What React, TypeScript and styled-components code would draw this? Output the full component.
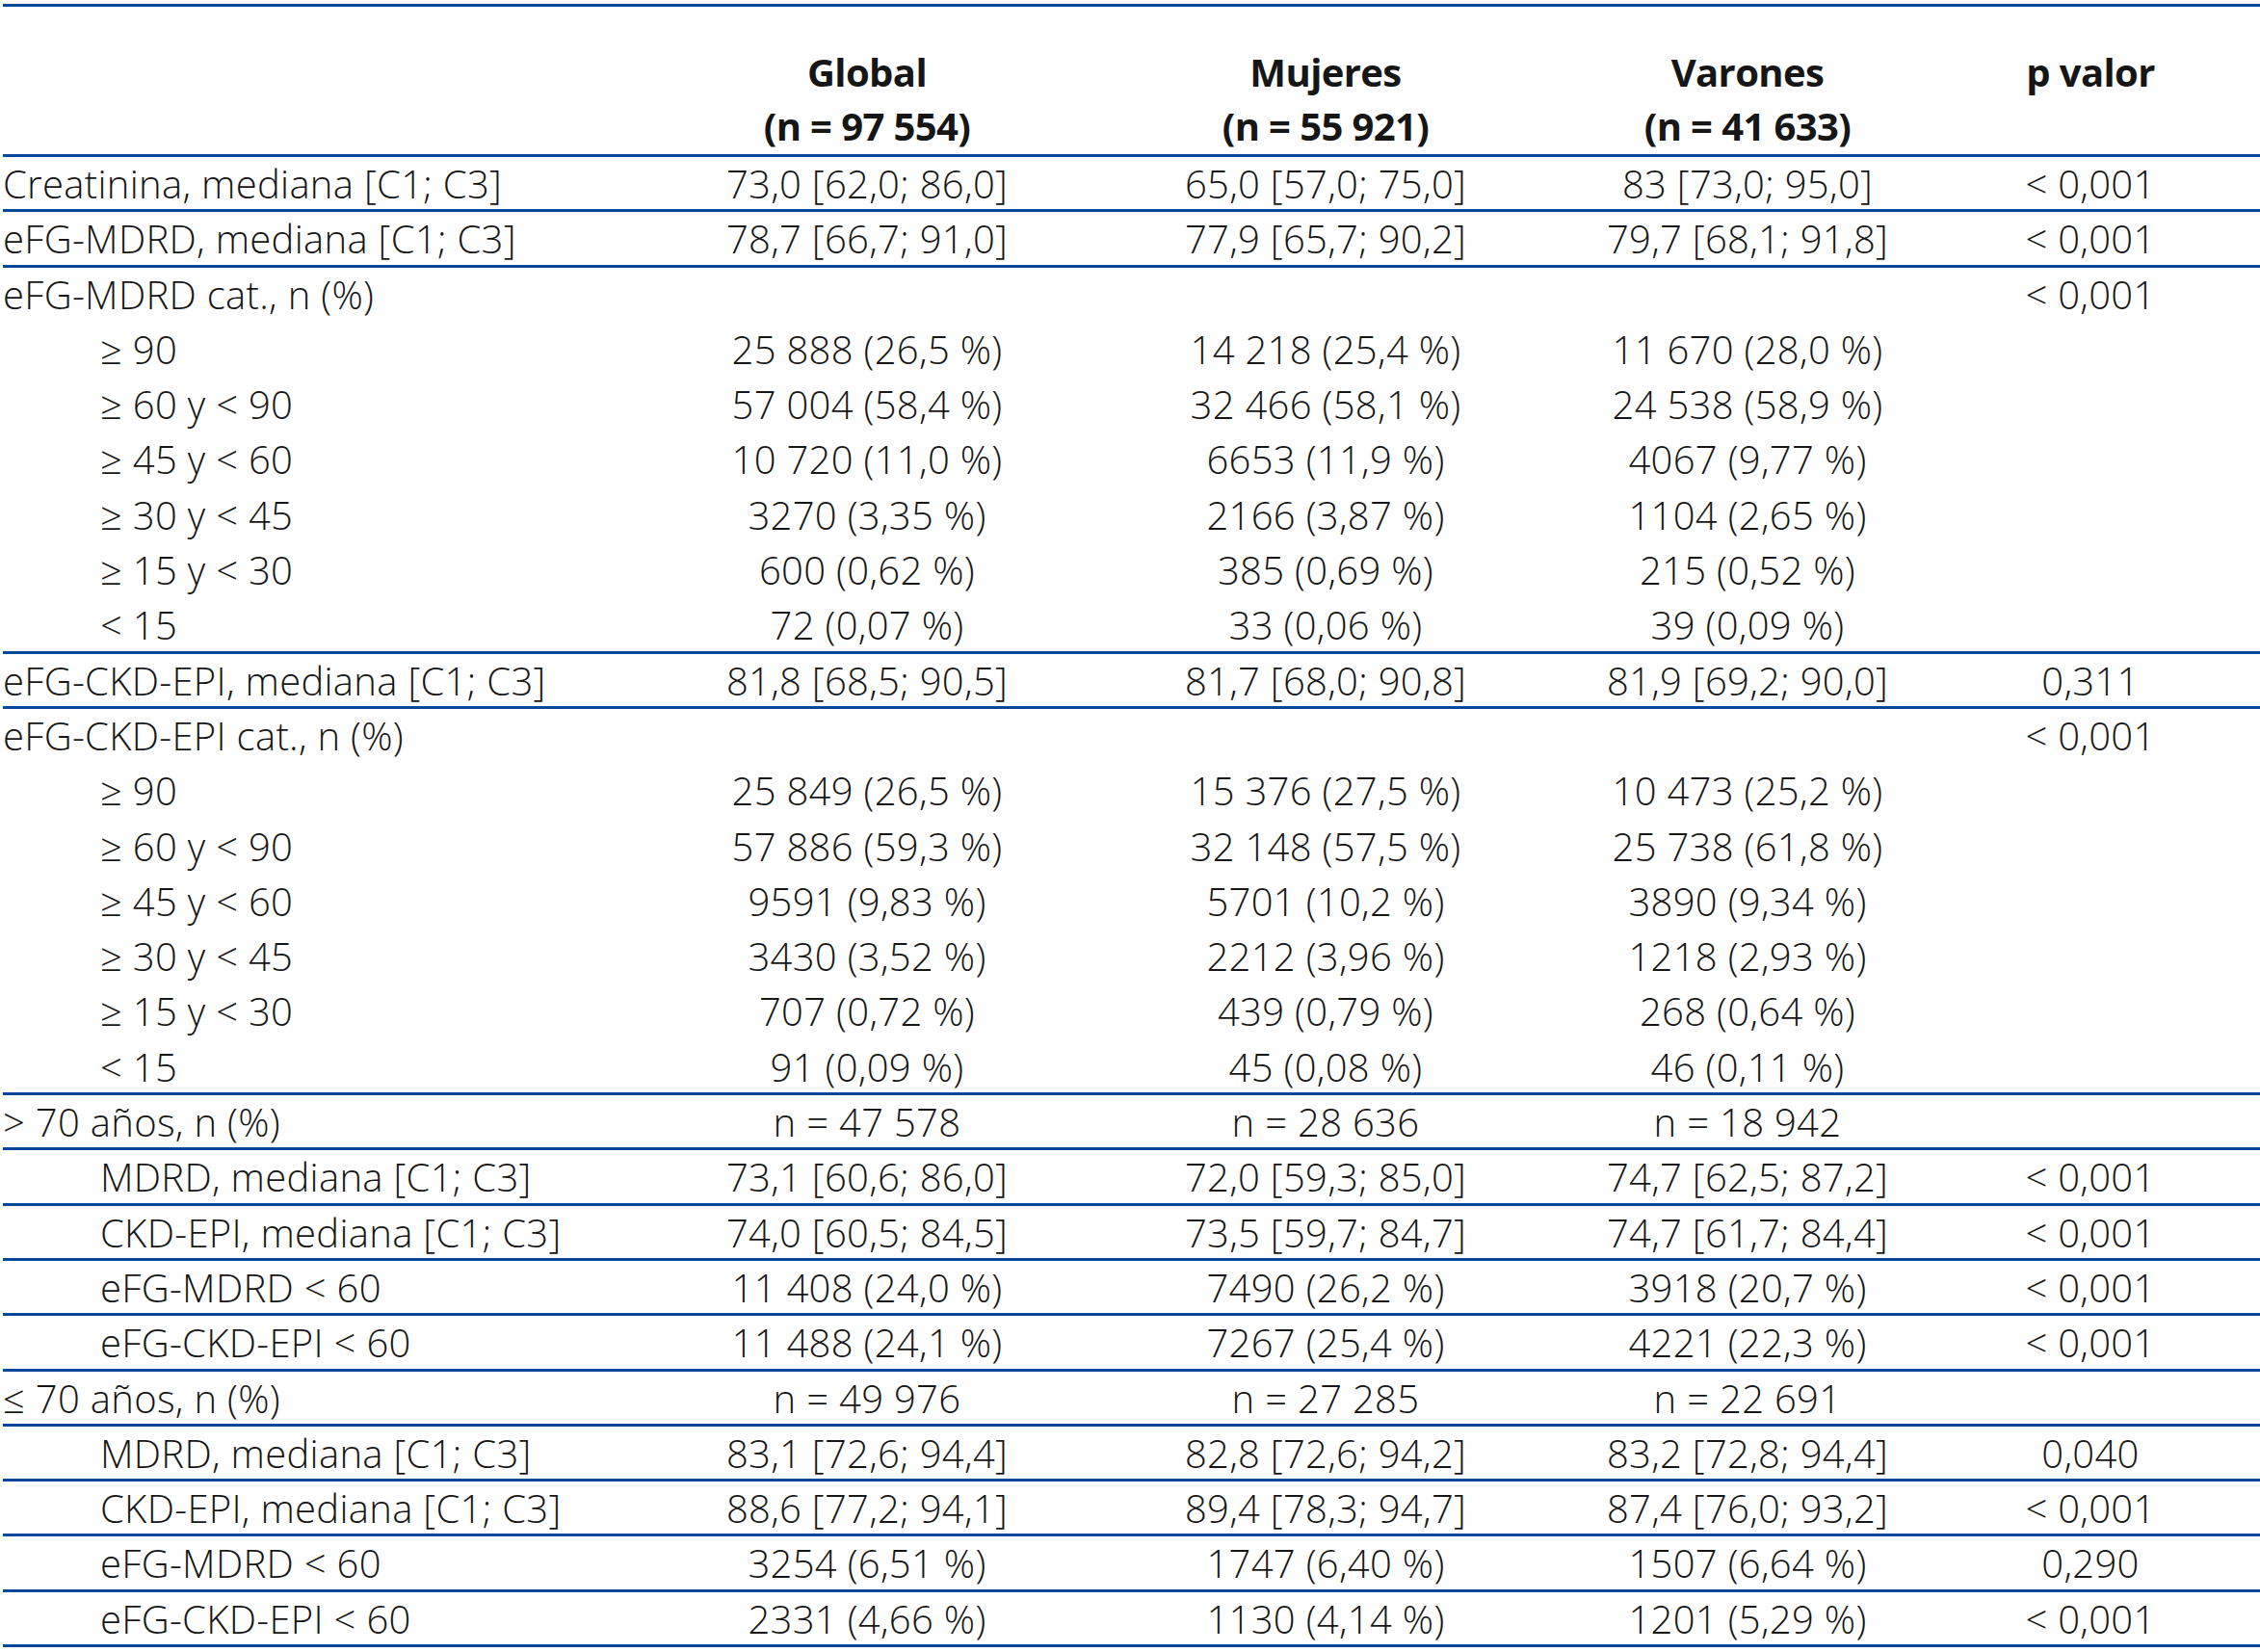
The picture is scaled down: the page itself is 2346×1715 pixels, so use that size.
import React from "react";
import styled, {createGlobalStyle} from "styled-components";

interface DataRow {
  label: string;
  indent?: boolean;
  values: string[];
  p?: string;
  line?: boolean;
}

const rows: DataRow[] = [
  {label: "Creatinina, mediana [C1; C3]", values: ["73,0 [62,0; 86,0]", "65,0 [57,0; 75,0]", "83 [73,0; 95,0]"], p: "< 0,001", line: true},
  {label: "eFG-MDRD, mediana [C1; C3]", values: ["78,7 [66,7; 91,0]", "77,9 [65,7; 90,2]", "79,7 [68,1; 91,8]"], p: "< 0,001", line: true},
  {label: "eFG-MDRD cat., n (%)", values: ["", "", ""], p: "< 0,001"},
  {label: "≥ 90", indent: true, values: ["25 888 (26,5 %)", "14 218 (25,4 %)", "11 670 (28,0 %)"]},
  {label: "≥ 60 y < 90", indent: true, values: ["57 004 (58,4 %)", "32 466 (58,1 %)", "24 538 (58,9 %)"]},
  {label: "≥ 45 y < 60", indent: true, values: ["10 720 (11,0 %)", "6653 (11,9 %)", "4067 (9,77 %)"]},
  {label: "≥ 30 y < 45", indent: true, values: ["3270 (3,35 %)", "2166 (3,87 %)", "1104 (2,65 %)"]},
  {label: "≥ 15 y < 30", indent: true, values: ["600 (0,62 %)", "385 (0,69 %)", "215 (0,52 %)"]},
  {label: "< 15", indent: true, values: ["72 (0,07 %)", "33 (0,06 %)", "39 (0,09 %)"], line: true},
  {label: "eFG-CKD-EPI, mediana [C1; C3]", values: ["81,8 [68,5; 90,5]", "81,7 [68,0; 90,8]", "81,9 [69,2; 90,0]"], p: "0,311", line: true},
  {label: "eFG-CKD-EPI cat., n (%)", values: ["", "", ""], p: "< 0,001"},
  {label: "≥ 90", indent: true, values: ["25 849 (26,5 %)", "15 376 (27,5 %)", "10 473 (25,2 %)"]},
  {label: "≥ 60 y < 90", indent: true, values: ["57 886 (59,3 %)", "32 148 (57,5 %)", "25 738 (61,8 %)"]},
  {label: "≥ 45 y < 60", indent: true, values: ["9591 (9,83 %)", "5701 (10,2 %)", "3890 (9,34 %)"]},
  {label: "≥ 30 y < 45", indent: true, values: ["3430 (3,52 %)", "2212 (3,96 %)", "1218 (2,93 %)"]},
  {label: "≥ 15 y < 30", indent: true, values: ["707 (0,72 %)", "439 (0,79 %)", "268 (0,64 %)"]},
  {label: "< 15", indent: true, values: ["91 (0,09 %)", "45 (0,08 %)", "46 (0,11 %)"], line: true},
  {label: "> 70 años, n (%)", values: ["n = 47 578", "n = 28 636", "n = 18 942"], line: true},
  {label: "MDRD, mediana [C1; C3]", indent: true, values: ["73,1 [60,6; 86,0]", "72,0 [59,3; 85,0]", "74,7 [62,5; 87,2]"], p: "< 0,001", line: true},
  {label: "CKD-EPI, mediana [C1; C3]", indent: true, values: ["74,0 [60,5; 84,5]", "73,5 [59,7; 84,7]", "74,7 [61,7; 84,4]"], p: "< 0,001", line: true},
  {label: "eFG-MDRD < 60", indent: true, values: ["11 408 (24,0 %)", "7490 (26,2 %)", "3918 (20,7 %)"], p: "< 0,001", line: true},
  {label: "eFG-CKD-EPI < 60", indent: true, values: ["11 488 (24,1 %)", "7267 (25,4 %)", "4221 (22,3 %)"], p: "< 0,001", line: true},
  {label: "≤ 70 años, n (%)", values: ["n = 49 976", "n = 27 285", "n = 22 691"], line: true},
  {label: "MDRD, mediana [C1; C3]", indent: true, values: ["83,1 [72,6; 94,4]", "82,8 [72,6; 94,2]", "83,2 [72,8; 94,4]"], p: "0,040", line: true},
  {label: "CKD-EPI, mediana [C1; C3]", indent: true, values: ["88,6 [77,2; 94,1]", "89,4 [78,3; 94,7]", "87,4 [76,0; 93,2]"], p: "< 0,001", line: true},
  {label: "eFG-MDRD < 60", indent: true, values: ["3254 (6,51 %)", "1747 (6,40 %)", "1507 (6,64 %)"], p: "0,290", line: true},
  {label: "eFG-CKD-EPI < 60", indent: true, values: ["2331 (4,66 %)", "1130 (4,14 %)", "1201 (5,29 %)"], p: "< 0,001", line: true},
];

const groups = [
  {title: "Global", n: "(n = 97 554)"},
  {title: "Mujeres", n: "(n = 55 921)"},
  {title: "Varones", n: "(n = 41 633)"},
];

const App: React.FC = () => {
  return (
    <>
      <GlobalStyle />
      <StyledTable>
        <StyledHeadRow>
          <StyledHeadCell />
          {groups.map((g) => (
            <StyledHeadCell key={g.title}>
              {g.title}
              <br />
              {g.n}
            </StyledHeadCell>
          ))}
          <StyledHeadCell $last>p valor</StyledHeadCell>
        </StyledHeadRow>
        {rows.map((row, i) => (
          <StyledRow key={i} $line={row.line}>
            <StyledLabel $indent={row.indent}>{row.label}</StyledLabel>
            {row.values.map((v, j) => (
              <StyledCell key={j}>{v}</StyledCell>
            ))}
            <StyledCell $last>{row.p}</StyledCell>
          </StyledRow>
        ))}
      </StyledTable>
    </>
  );
};

export default App;

const LINE = "#06479b";
const COLUMNS = "657px 480px 472px 404px 1fr";

const GlobalStyle = createGlobalStyle`
  body {
    margin: 0;
    background: #ffffff;
    color: #161616;
    font-family: "Open Sans", "Liberation Sans", sans-serif;
  }
`;

const StyledTable = styled.div`
  width: 2343px;
  margin: 4px 0 0 3px;
  border-top: 3px solid ${LINE};
`;

const StyledHeadRow = styled.div`
  display: grid;
  grid-template-columns: ${COLUMNS};
  box-sizing: border-box;
  height: 156px;
  padding-top: 40px;
  border-bottom: 3px solid ${LINE};
`;

const StyledHeadCell = styled.div<{$last?: boolean}>`
  padding-right: ${({$last}) => ($last ? "22px" : "0")};
  text-align: center;
  font-size: 40px;
  font-weight: 700;
  line-height: 56px;
  letter-spacing: -0.6px;
`;

const StyledRow = styled.div<{$line?: boolean}>`
  display: grid;
  grid-template-columns: ${COLUMNS};
  align-items: center;
  box-sizing: border-box;
  height: 57.3px;
  border-bottom: 3px solid ${({$line}) => ($line ? LINE : "transparent")};
  font-size: 40px;
  font-weight: 350;
  letter-spacing: 0.3px;
  white-space: nowrap;
`;

const StyledLabel = styled.div<{$indent?: boolean}>`
  padding-left: ${({$indent}) => ($indent ? "101px" : "0")};
`;

const StyledCell = styled.div<{$last?: boolean}>`
  padding-right: ${({$last}) => ($last ? "22px" : "0")};
  text-align: center;
`;
